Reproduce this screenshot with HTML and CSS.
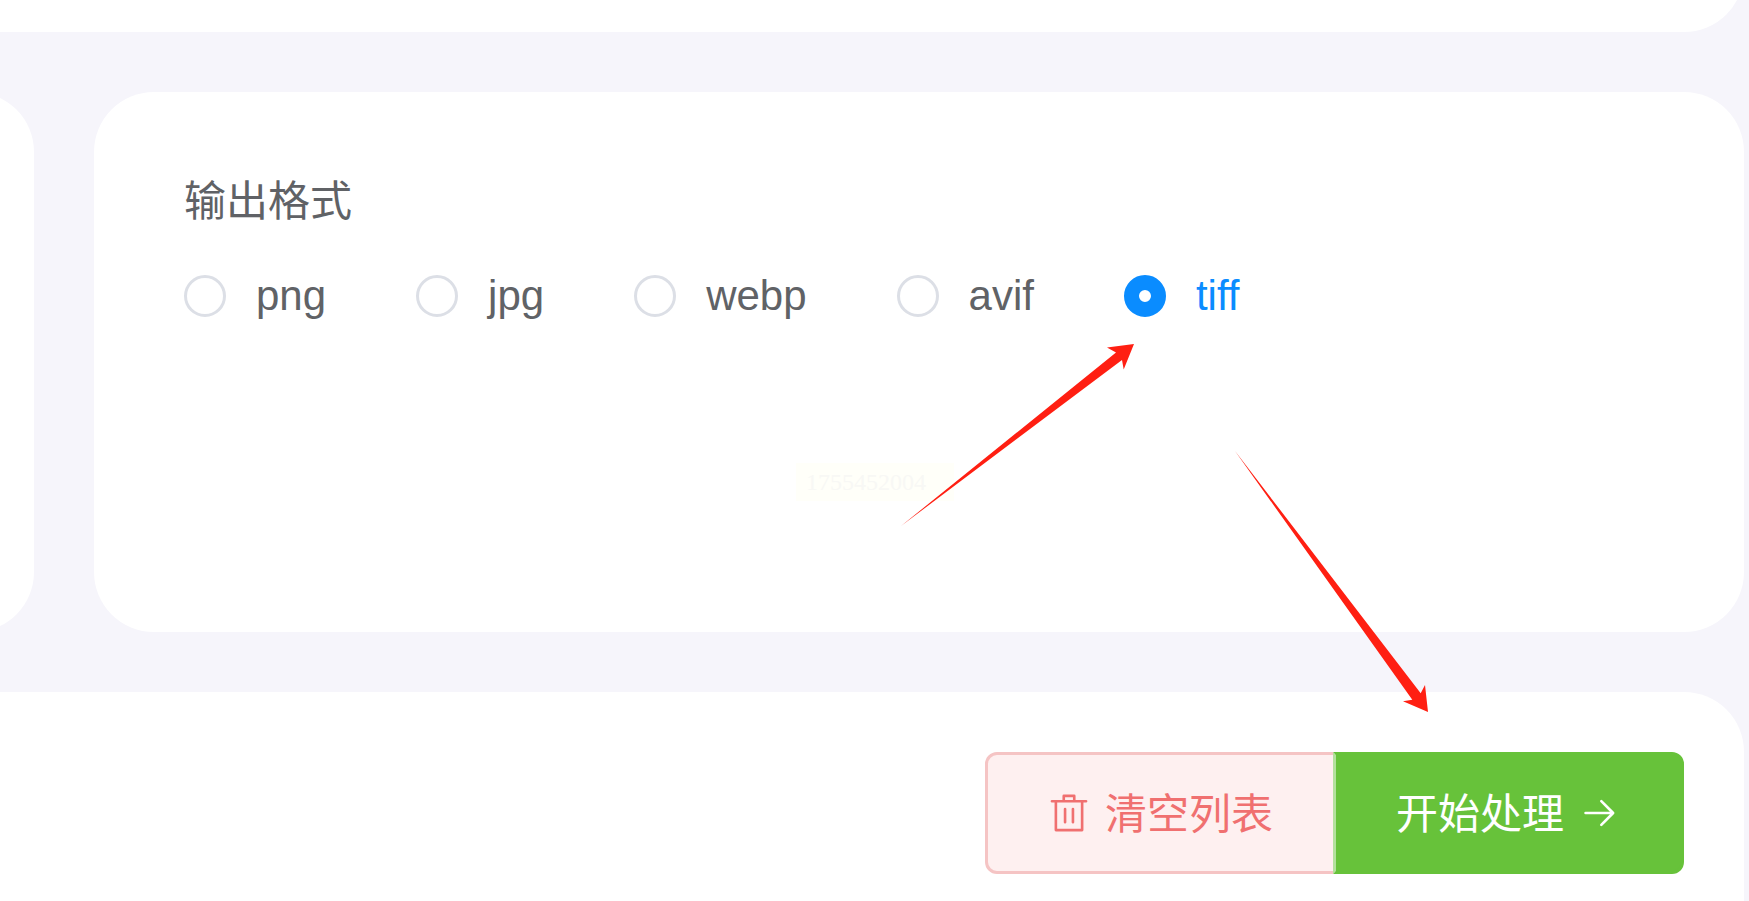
FILE: index.html
```html
<!DOCTYPE html>
<html lang="zh-CN">
<head>
<meta charset="utf-8">
<title>输出格式</title>
<link rel="stylesheet" href="styles.css">
</head>
<body>
<main class="page">
  <section class="card card-top"></section>
  <div class="row">
    <section class="card card-side"></section>
    <section class="card card-format">
      <fieldset class="format">
        <legend class="format-title">输出格式</legend>
        <div class="radio-group">
          <label class="radio"><input type="radio" name="format" value="png"><span>png</span></label>
          <label class="radio"><input type="radio" name="format" value="jpg"><span>jpg</span></label>
          <label class="radio"><input type="radio" name="format" value="webp"><span>webp</span></label>
          <label class="radio"><input type="radio" name="format" value="avif"><span>avif</span></label>
          <label class="radio"><input type="radio" name="format" value="tiff" checked><span>tiff</span></label>
        </div>
      </fieldset>
    </section>
  </div>
  <section class="card card-actions">
    <div class="button-group">
      <button class="button button-danger" type="button">
        <svg class="icon" viewBox="0 0 1024 1024" aria-hidden="true"><path fill="currentColor" d="M160 256H96a32 32 0 0 1 0-64h256V95.936a32 32 0 0 1 32-32h256a32 32 0 0 1 32 32V192h256a32 32 0 1 1 0 64h-64v672a32 32 0 0 1-32 32H192a32 32 0 0 1-32-32V256zm448-64v-64H416v64h192zM224 896h576V256H224v640zm192-128a32 32 0 0 1-32-32V416a32 32 0 0 1 64 0v320a32 32 0 0 1-32 32zm192 0a32 32 0 0 1-32-32V416a32 32 0 0 1 64 0v320a32 32 0 0 1-32 32z"/></svg>
        <span class="button-label">清空列表</span>
      </button>
      <button class="button button-success" type="button">
        <span class="button-label">开始处理</span>
        <svg class="icon" viewBox="0 0 1024 1024" aria-hidden="true"><path fill="currentColor" d="M754.752 480H160a32 32 0 1 0 0 64h594.752L521.344 777.344a32 32 0 0 0 45.312 45.312l288-288a32 32 0 0 0 0-45.312l-288-288a32 32 0 1 0-45.312 45.312z"/></svg>
      </button>
    </div>
  </section>
</main>
<div class="watermark">1755452004</div>
<svg class="arrows" viewBox="0 0 1749 901" aria-hidden="true">
  <path d="M901 526 1116 352.5 1107 347.5 1134 344 1123.7 369.5 1122 360Z"/>
  <path d="M1235 451 1412.3 699.7 1403 701.3 1428 712 1425 685 1420.7 693.3Z"/>
</svg>
</body>
</html>
```

FILE: styles.css
```css
* {
  box-sizing: border-box;
}

body {
  position: relative;
  margin: 0;
  height: 100vh;
  overflow: hidden;
  background: #f6f5fb;
  color: #606266;
  font-family: "Liberation Sans", "Noto Sans CJK SC", sans-serif;
  font-size: 42px;
  line-height: 60px;
}

/* The cards run past the left edge of the window. */
.page {
  display: flex;
  flex-direction: column;
  gap: 60px;
  height: 100vh;
  margin: 0 5px 0 -120px;
}

.card {
  background: #fff;
  border-radius: 60px;
}

.card-top {
  flex: none;
  height: 92px;
  margin-top: -60px;
  border-radius: 0 0 60px 60px;
}

.row {
  display: flex;
  flex: none;
  gap: 60px;
  min-height: 540px;
}

.card-side {
  flex: none;
  width: 154px;
}

.card-format {
  flex: 1;
  padding: 80px 90px;
}

.format {
  margin: 0;
  padding: 0;
  border: 0;
}

.format-title {
  padding: 0;
}

.radio-group {
  display: flex;
  gap: 90px;
  padding-top: 34px;
}

.radio {
  display: flex;
  align-items: center;
  gap: 30px;
}

.radio input {
  appearance: none;
  flex: none;
  width: 42px;
  height: 42px;
  margin: 0;
  border: 3px solid #dcdfe6;
  border-radius: 50%;
  background: #fff;
}

.radio input:checked {
  border: 15px solid #0a8cff;
}

.radio input:checked + span {
  color: #0a8cff;
}

.card-actions {
  display: flex;
  flex: 1;
  justify-content: flex-end;
  align-items: flex-start;
  padding: 60px 60px 0;
  border-radius: 60px 60px 0 0;
}

.button-group {
  display: flex;
}

.button {
  display: flex;
  align-items: center;
  gap: 15px;
  height: 122px;
  padding: 0 60px;
  border: 3px solid;
  font: inherit;
}

.button-label {
  padding-top: 4px;
}

.button-danger {
  border-color: #f5c4c4;
  border-radius: 12px 0 0 12px;
  background: #fef0f0;
  color: #f07070;
}

.button-success {
  margin-left: -3px;
  border-color: #67c23a;
  border-left-color: #b3e19d;
  border-radius: 0 12px 12px 0;
  background: #67c23a;
  color: #fff;
}

.icon {
  display: block;
  flex: none;
  width: 42px;
  height: 42px;
}

.watermark {
  position: absolute;
  top: 463px;
  left: 796px;
  width: 158px;
  padding: 0 10px;
  background: #fffff9;
  color: #f8f8f5;
  font: 24px/38px "Liberation Serif", serif;
}

.arrows {
  position: absolute;
  top: 0;
  left: 0;
  width: 1749px;
  height: 901px;
  fill: #ff1f12;
  pointer-events: none;
}
```
